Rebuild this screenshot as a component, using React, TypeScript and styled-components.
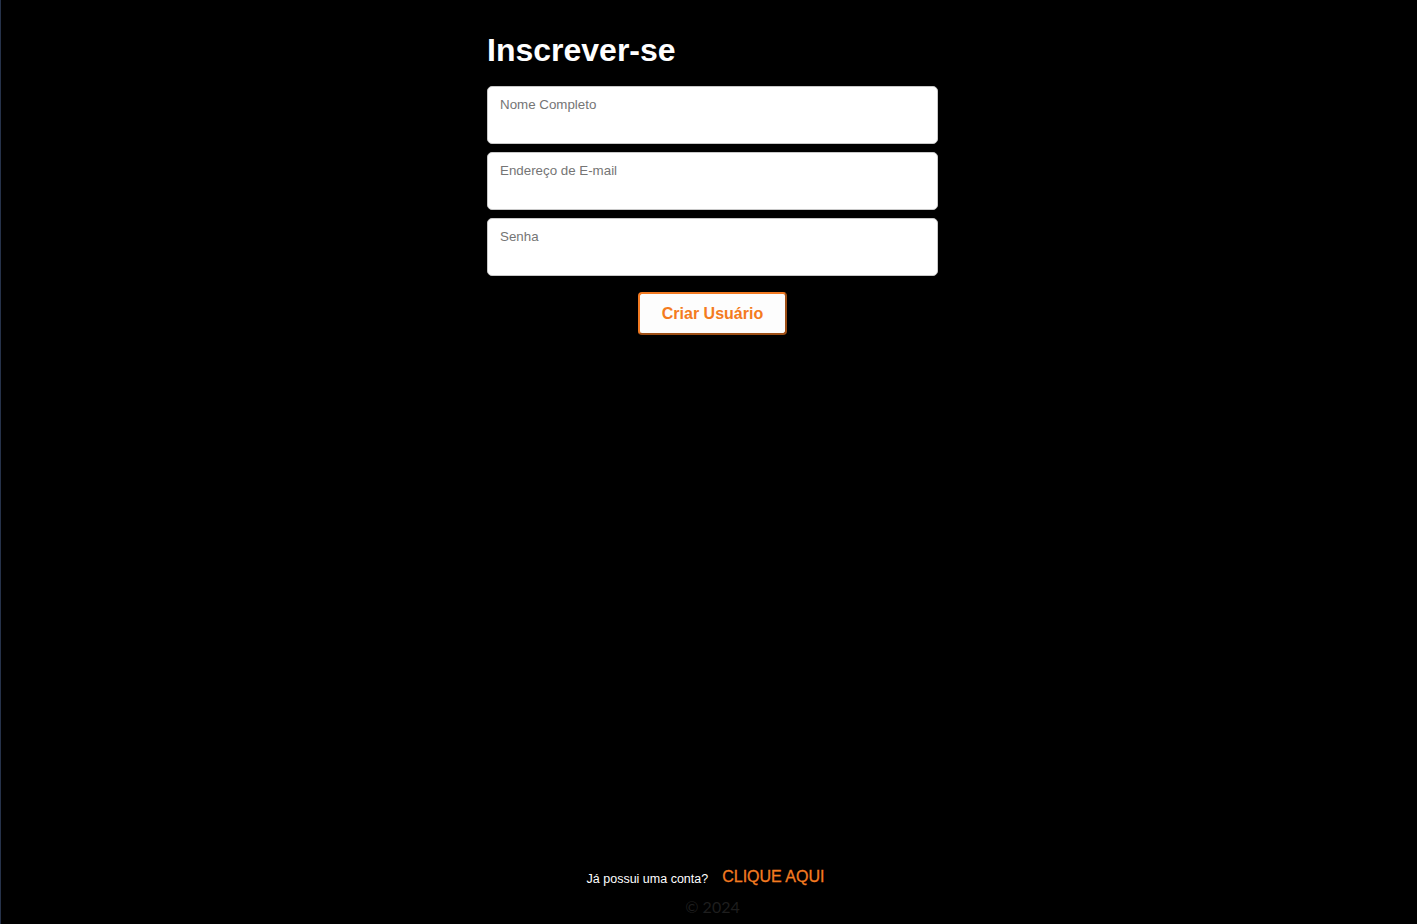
import React from "react";
import styled, { createGlobalStyle } from "styled-components";

const Global = createGlobalStyle`
  html, body { margin: 0; padding: 0; background: #000; }
  body { font-family: "Liberation Sans", Arial, sans-serif; }
  * { box-sizing: border-box; }
`;

const Page = styled.div`
  min-height: 924px;
  display: flex;
  flex-direction: column;
  align-items: center;
  padding-left: 8px;
  background: #000;
  box-shadow: inset 1px 0 0 #26324a;
`;

const Main = styled.main`
  flex: 1;
  width: 451px;
  display: flex;
  flex-direction: column;
  padding-top: 32px;
`;

const Title = styled.h1`
  margin: 0 0 17px;
  font-family: "Liberation Sans", Arial, sans-serif;
  font-size: 32px;
  font-weight: 700;
  line-height: 37px;
  color: #fff;
`;

const Form = styled.form`
  display: flex;
  flex-direction: column;
  gap: 8px;
`;

const Field = styled.input`
  width: 100%;
  height: 58px;
  padding: 10px 12px 31px;
  border: 1px solid #c8c8c8;
  border-radius: 5px;
  background: #fff;
  font-family: "Liberation Sans", Arial, sans-serif;
  font-size: 13.333px;
  line-height: 15px;
  color: #333;
  outline: none;
  &::placeholder { color: #757575; }
`;

const Actions = styled.div`
  display: flex;
  justify-content: center;
  margin-top: 8px;
`;

const Submit = styled.button`
  padding: 10px 22px;
  border: 2px outset #f27a22;
  border-radius: 4px;
  background: #fdfdfd;
  color: #f47b20;
  font-family: "Liberation Sans", Arial, sans-serif;
  font-size: 16px;
  font-weight: 700;
  line-height: 19px;
  cursor: pointer;
`;

const Footer = styled.footer`
  display: flex;
  flex-direction: column;
  align-items: center;
  padding-bottom: 8px;
`;

const LoginRow = styled.div`
  display: flex;
  align-items: flex-end;
`;

const Question = styled.span`
  font-family: "Liberation Sans", Arial, sans-serif;
  font-size: 12.5px;
  line-height: 14px;
  color: #fff;
`;

const LinkButton = styled.button`
  padding: 0 14px;
  border: none;
  background: transparent;
  color: #f47b20;
  font-family: "Liberation Sans", Arial, sans-serif;
  font-size: 16px;
  font-weight: 400;
  line-height: 18px;
  cursor: pointer;
  -webkit-text-stroke: 0.3px #f47b20;
`;

const Copy = styled.p`
  margin: 11px 0 0;
  font-family: Lato, "Liberation Sans", sans-serif;
  font-size: 16px;
  line-height: 19px;
  color: #1e1e1e;
`;

export default function App() {
  return (
    <>
      <Global />
      <Page>
        <Main>
          <Title>Inscrever-se</Title>
          <Form onSubmit={(e) => e.preventDefault()}>
            <Field type="text" placeholder="Nome Completo" />
            <Field type="email" placeholder="Endereço de E-mail" />
            <Field type="password" placeholder="Senha" />
            <Actions>
              <Submit type="submit">Criar Usuário</Submit>
            </Actions>
          </Form>
        </Main>
        <Footer>
          <LoginRow>
            <Question>Já possui uma conta?</Question>
            <LinkButton type="button">CLIQUE AQUI</LinkButton>
          </LoginRow>
          <Copy>© 2024</Copy>
        </Footer>
      </Page>
    </>
  );
}
